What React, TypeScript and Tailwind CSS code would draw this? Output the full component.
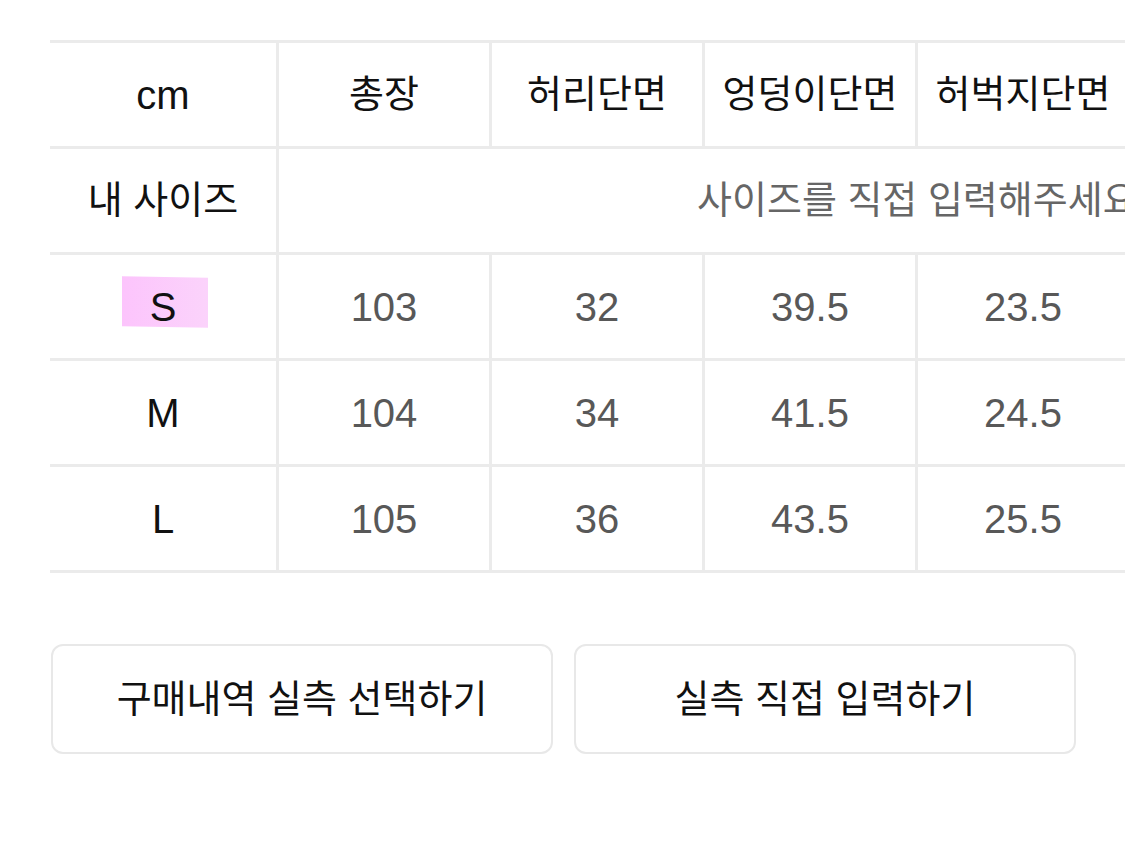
import React from "react";

const font = { fontFamily: '"Liberation Sans", "Noto Sans CJK KR", sans-serif' };

const headers = ["총장", "허리단면", "엉덩이단면", "허벅지단면", "밑단단면"];
const rows = [
  { size: "S", vals: ["103", "32", "39.5", "23.5", "21"] },
  { size: "M", vals: ["104", "34", "41.5", "24.5", "22"] },
  { size: "L", vals: ["105", "36", "43.5", "25.5", "23"] },
];

function Row({ children }: { children: React.ReactNode }) {
  return (
    <div className="flex h-[106px] border-b-[3px] border-[#ebebeb]">{children}</div>
  );
}

export default function App() {
  return (
    <div className="w-[1125px] h-[852px] overflow-hidden bg-white" style={font}>
      <div className="pt-[40px] pl-[50px]">
        <div className="w-[1400px] border-t-[3px] border-[#ebebeb]">
          <Row>
            <div className="w-[226px] shrink-0 flex items-center justify-center text-[40px] text-[#111]">
              cm
            </div>
            {headers.map((h) => (
              <div
                key={h}
                className="w-[213px] shrink-0 border-l-[3px] border-[#ebebeb] flex items-center justify-center text-[38px] text-[#111] whitespace-nowrap"
              >
                {h}
              </div>
            ))}
          </Row>
          <Row>
            <div className="w-[226px] shrink-0 flex items-center justify-center text-[38px] text-[#111]">
              내 사이즈
            </div>
            <div className="flex-1 border-l-[3px] border-[#ebebeb] flex items-center pl-[418px] text-[38px] text-[#666] whitespace-nowrap">
              사이즈를 직접 입력해주세요
            </div>
          </Row>
          {rows.map((r) => (
            <Row key={r.size}>
              <div className="relative w-[226px] shrink-0 flex items-center justify-center text-[40px] text-[#111]">
                {r.size === "S" && (
                  <span className="absolute left-[72px] top-[22px] w-[86px] h-[50px] bg-gradient-to-r from-[#fcc4fc] to-[#fbd3fb] skew-y-1" />
                )}
                <span className="relative">{r.size}</span>
              </div>
              {r.vals.map((v, i) => (
                <div
                  key={i}
                  className="w-[213px] shrink-0 border-l-[3px] border-[#ebebeb] flex items-center justify-center text-[40px] text-[#585858]"
                >
                  {v}
                </div>
              ))}
            </Row>
          ))}
        </div>
      </div>
      <div className="flex gap-[21px] pl-[51px] mt-[71px]">
        <button className="w-[502px] h-[110px] border-2 border-[#e8e8e8] rounded-[12px] bg-white flex items-center justify-center text-[38px] text-[#111]">
          구매내역 실측 선택하기
        </button>
        <button className="w-[502px] h-[110px] border-2 border-[#e8e8e8] rounded-[12px] bg-white flex items-center justify-center text-[38px] text-[#111]">
          실측 직접 입력하기
        </button>
      </div>
    </div>
  );
}
